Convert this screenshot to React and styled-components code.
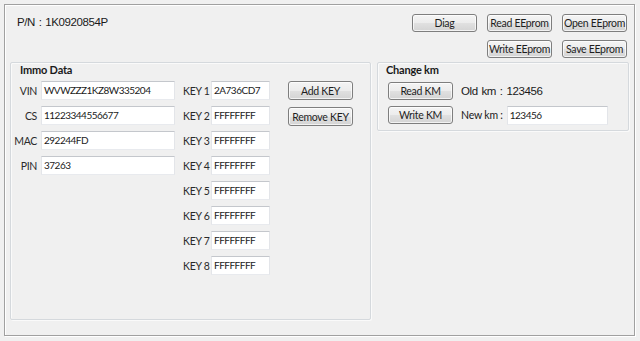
import React from 'react';
import styled, { createGlobalStyle } from 'styled-components';

const GlobalStyle = createGlobalStyle`
  body {
    margin: 0;
    background: #f0f0f0;
    font-family: Lato, "Noto Sans", sans-serif;
    color: #222;
  }
`;

const Window = styled.div`
  width: 640px;
  height: 341px;
  padding: 4px;
  box-sizing: border-box;
  background: #f0f0f0;
`;

const Frame = styled.div`
  width: 631px;
  height: 332px;
  box-sizing: border-box;
  border: 1px solid #a0a0a0;
  box-shadow: 1px 1px 0 #ffffff, inset 1px 1px 0 #ffffff;
  display: flex;
  flex-direction: column;
`;

const Header = styled.div`
  display: flex;
  justify-content: space-between;
  align-items: flex-start;
  padding: 9px 7px 0 12px;
`;

const PartNumber = styled.div`
  padding-top: 1px;
  font-family: "Liberation Sans", Arial, sans-serif;
  font-size: 11.5px;
  letter-spacing: -0.4px;
  word-spacing: 1px;
  line-height: 14px;
  color: #1a1a1a;
`;

const ButtonGrid = styled.div`
  display: grid;
  grid-template-columns: 65px 65px 65px;
  grid-template-rows: 18px 18px;
  column-gap: 10px;
  row-gap: 8px;
`;

const Button = styled.button`
  grid-column: ${(p) => p.$col || 'auto'};
  grid-row: ${(p) => p.$row || 'auto'};
  width: ${(p) => p.$width || 65}px;
  height: ${(p) => p.$height || 18}px;
  padding: 0;
  box-sizing: border-box;
  border: 1px solid #7e7e7e;
  border-radius: 3px;
  background: linear-gradient(#f4f4f4 0%, #ececec 50%, #e0e0e0 52%, #d4d4d4 100%);
  box-shadow: inset 0 0 0 1px rgba(255, 255, 255, 0.7);
  font-family: Lato, "Noto Sans", sans-serif;
  font-size: 10.5px;
  letter-spacing: -0.3px;
  line-height: 14px;
  white-space: nowrap;
  color: #1e1e1e;
`;

const GroupsRow = styled.div`
  display: flex;
  align-items: flex-start;
  gap: 6px;
  padding: 4px 0 0 5px;
`;

const Group = styled.div`
  width: ${(p) => p.$width}px;
  height: ${(p) => p.$height}px;
  box-sizing: border-box;
  border: 1px solid #d5d9dd;
  box-shadow: inset 1px 1px 0 #fafafa, 1px 1px 0 #fafafa;
  border-radius: 2px;
`;

const GroupTitle = styled.div`
  margin-left: ${(p) => p.$indent}px;
  font-weight: bold;
  font-size: 11px;
  letter-spacing: -0.2px;
  line-height: 13px;
  color: #1a1a1a;
`;

const ImmoBody = styled.div`
  display: flex;
  align-items: flex-start;
  margin: 5px 0 0 3px;
`;

const FieldGrid = styled.div`
  display: grid;
  grid-template-columns: ${(p) => p.$label}px ${(p) => p.$input}px;
  grid-auto-rows: 19px;
  column-gap: 4px;
  row-gap: 6px;
  align-items: center;
  margin-right: ${(p) => p.$after || 0}px;
`;

const Label = styled.span`
  text-align: right;
  font-size: 10.5px;
  letter-spacing: -0.3px;
  white-space: nowrap;
  color: #2a2a2a;
`;

const Field = styled.div`
  height: 19px;
  box-sizing: border-box;
  background: #fff;
  border: 1px solid;
  border-color: #c4c7cc #e3e5e9 #e8eaee #e3e5e9;
  padding: 0 2px;
  font-size: 10px;
  letter-spacing: -0.5px;
  line-height: 16px;
  color: #1a1a1a;
  white-space: nowrap;
  overflow: hidden;
  width: ${(p) => (p.$width ? `${p.$width}px` : 'auto')};
`;

const ButtonColumn = styled.div`
  display: flex;
  flex-direction: column;
  gap: 7px;
`;

const KmBody = styled.div`
  display: grid;
  grid-template-columns: 65px auto;
  grid-auto-rows: 18px;
  column-gap: 8px;
  row-gap: 6px;
  align-items: center;
  margin: 6px 0 0 10px;
`;

const KmText = styled.div`
  display: flex;
  align-items: center;
  gap: 4px;
  font-family: ${(p) => (p.$plain ? '"Liberation Sans", Arial, sans-serif' : 'Lato, "Noto Sans", sans-serif')};
  font-size: ${(p) => (p.$plain ? 11.5 : 10.5)}px;
  letter-spacing: ${(p) => (p.$plain ? -0.4 : -0.2)}px;
  word-spacing: ${(p) => (p.$plain ? 1 : 0)}px;
  color: #1a1a1a;
  white-space: nowrap;
`;

const immo = [
  ['VIN', 'WVWZZZ1KZ8W335204'],
  ['CS', '11223344556677'],
  ['MAC', '292244FD'],
  ['PIN', '37263'],
];

const keys = ['2A736CD7', 'FFFFFFFF', 'FFFFFFFF', 'FFFFFFFF', 'FFFFFFFF', 'FFFFFFFF', 'FFFFFFFF', 'FFFFFFFF'];

export default function App() {
  return (
    <Window>
      <GlobalStyle />
      <Frame>
        <Header>
          <PartNumber>P/N : 1K0920854P</PartNumber>
          <ButtonGrid>
            <Button $col={1} $row={1}>Diag</Button>
            <Button $col={2} $row={1}>Read EEprom</Button>
            <Button $col={3} $row={1}>Open EEprom</Button>
            <Button $col={2} $row={2}>Write EEprom</Button>
            <Button $col={3} $row={2}>Save EEprom</Button>
          </ButtonGrid>
        </Header>

        <GroupsRow>
          <Group $width={361} $height={258}>
            <GroupTitle $indent={9}>Immo Data</GroupTitle>
            <ImmoBody>
              <FieldGrid $label={23} $input={134} $after={8}>
                {immo.map(([label, value]) => (
                  <React.Fragment key={label}>
                    <Label>{label}</Label>
                    <Field>{value}</Field>
                  </React.Fragment>
                ))}
              </FieldGrid>
              <FieldGrid $label={24} $input={59} $after={18}>
                {keys.map((value, i) => (
                  <React.Fragment key={i}>
                    <Label>KEY {i + 1}</Label>
                    <Field>{value}</Field>
                  </React.Fragment>
                ))}
              </FieldGrid>
              <ButtonColumn>
                <Button $height={19}>Add KEY</Button>
                <Button $height={19}>Remove KEY</Button>
              </ButtonColumn>
            </ImmoBody>
          </Group>

          <Group $width={252} $height={69}>
            <GroupTitle $indent={8}>Change km</GroupTitle>
            <KmBody>
              <Button>Read KM</Button>
              <KmText $plain>Old km : 123456</KmText>
              <Button>Write KM</Button>
              <KmText>
                New km :<Field $width={101}>123456</Field>
              </KmText>
            </KmBody>
          </Group>
        </GroupsRow>
      </Frame>
    </Window>
  );
}
